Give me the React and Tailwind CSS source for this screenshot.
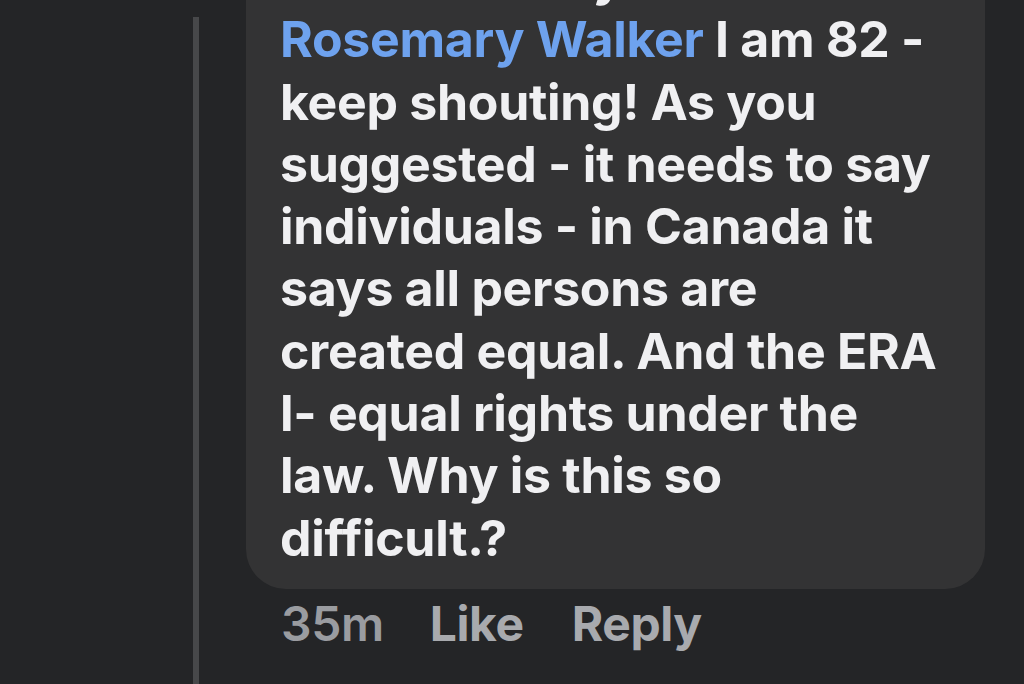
import React from "react";

const lines = [
  "keep shouting! As you",
  "suggested - it needs to say",
  "individuals - in Canada it",
  "says all persons are",
  "created equal. And the ERA",
  "l- equal rights under the",
  "law. Why is this so",
  "difficult.?",
];

const App = () => {
  return (
    <div
      className="h-[684px] w-[1024px] overflow-hidden bg-[#242527] flex"
      style={{ fontFamily: "Inter, 'Noto Sans', sans-serif", fontVariantLigatures: "none" }}
    >
      {/* thread line */}
      <div className="w-[193px] shrink-0" />
      <div className="w-[6px] shrink-0 mt-[17px] bg-[#47484a]" />
      <div className="w-[47px] shrink-0" />

      <div className="flex flex-col w-[739px] -mt-[62px]">
        <div className="bg-[#333334] rounded-[40px] pl-[34px] pr-[20px] pt-[8px] pb-[20px]">
          <div className="text-[50px] leading-[62.3px] font-bold text-[#f0f0f2] tracking-[-0.3px] whitespace-nowrap">
            <div className="flex">
              <span className="w-[313px]" />
              <span>y</span>
            </div>
            <div>
              <span className="text-[#6ea2ee]">Rosemary Walker</span> I am 82 -
            </div>
            {lines.map((line) => (
              <div key={line}>{line}</div>
            ))}
          </div>
        </div>

        <div className="flex items-center pl-[35px] pt-[9px] text-[48px] leading-[52px] tracking-[-0.4px]">
          <span className="font-semibold text-[#9a9ca0]">35m</span>
          <span className="ml-[46px] font-bold text-[#a8aaae]">Like</span>
          <span className="ml-[48px] font-bold text-[#a8aaae]">Reply</span>
        </div>
      </div>
    </div>
  );
};

export default App;
